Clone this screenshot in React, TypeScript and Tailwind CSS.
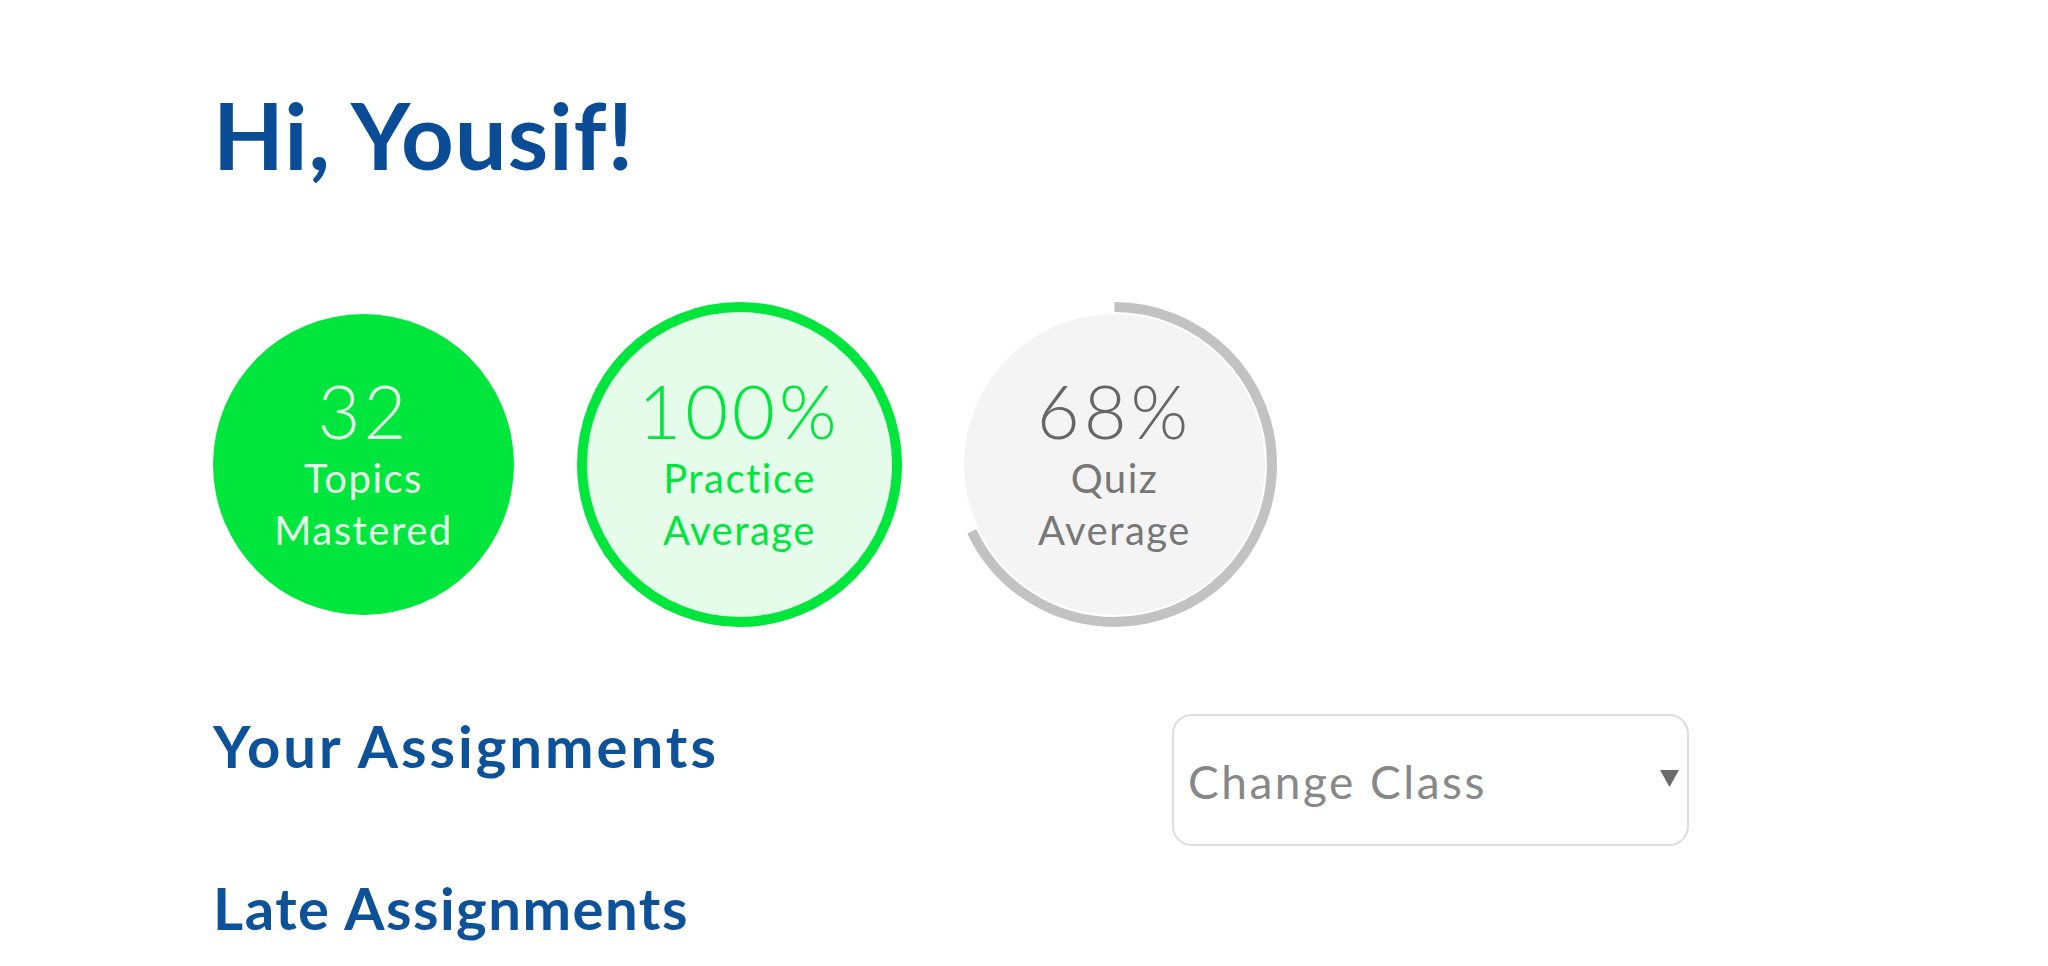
import React from "react";

const font = { fontFamily: "Lato, 'Noto Sans', sans-serif" };

function Ring() {
  const r = 157.5;
  const c = 2 * Math.PI * r;
  const len = c * 0.68;
  return (
    <svg className="absolute inset-0" width="325" height="325" viewBox="0 0 325 325">
      <circle
        cx="162.5"
        cy="162.5"
        r={r}
        fill="none"
        stroke="#c2c2c2"
        strokeWidth="10"
        strokeDasharray={`${len} ${c}`}
        transform="rotate(-90 162.5 162.5)"
      />
    </svg>
  );
}

export default function App() {
  return (
    <div className="min-h-screen w-full bg-white" style={font}>
      <div className="pl-[213px] pt-[89px]">
        <h1 className="text-[92px] font-bold leading-none tracking-[1px] text-[#0a4d96]">Hi, Yousif!</h1>

        <div className="mt-[121px] flex items-center">
          <div className="flex h-[301px] w-[301px] flex-col items-center justify-center rounded-full bg-[#00e63d] text-[#e6ffe9]">
            <div className="text-[74px] font-light leading-none tracking-[3px]">32</div>
            <div className="mt-[4px] text-center text-[40px] leading-[52px] tracking-[1.5px]">
              Topics
              <br />
              Mastered
            </div>
          </div>

          <div className="ml-[63px] flex h-[325px] w-[325px] flex-col items-center justify-center rounded-full border-[10px] border-[#00e63d] bg-[#e6fcea] text-[#00e63d]">
            <div className="text-[74px] font-light leading-none tracking-[4px]">100%</div>
            <div className="mt-[4px] text-center text-[40px] leading-[52px] tracking-[1.5px]">
              Practice
              <br />
              Average
            </div>
          </div>

          <div className="relative ml-[50px] flex h-[325px] w-[325px] items-center justify-center">
            <div className="flex h-[301px] w-[301px] flex-col items-center justify-center rounded-full bg-[#f4f4f4]">
              <div className="text-[74px] font-light leading-none tracking-[4px] text-[#666666]">68%</div>
              <div className="mt-[4px] text-center text-[40px] leading-[52px] tracking-[1.5px] text-[#777777]">
                Quiz
                <br />
                Average
              </div>
            </div>
            <Ring />
          </div>
        </div>

        <div className="mt-[87px] flex items-start">
          <div className="w-[959px]">
            <h2 className="mt-[3px] text-[58px] font-bold leading-none tracking-[3px] text-[#0d5298]">Your Assignments</h2>
            <h2 className="mt-[104px] text-[58px] font-bold leading-none tracking-[1.5px] text-[#0d5298]">Late Assignments</h2>
          </div>
          <div className="flex h-[132px] w-[517px] items-center justify-between rounded-[20px] border-2 border-[#dddddd] bg-white pl-[14px] pr-[8px]">
            <span className="mt-[2px] text-[46px] tracking-[2.5px] text-[#888888]">Change Class</span>
            <svg width="19" height="17" viewBox="0 0 19 17" className="mb-[4px]">
              <polygon points="0,0 19,0 9.5,17" fill="#6b6b6b" />
            </svg>
          </div>
        </div>
      </div>
    </div>
  );
}
